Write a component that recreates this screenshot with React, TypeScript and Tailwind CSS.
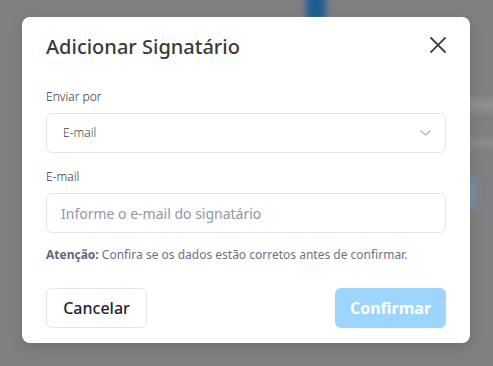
import React from "react";

export default function App() {
  return (
    <div
      className="relative w-[493px] h-[366px] overflow-hidden bg-[#808082]"
      style={{ fontFamily: '"Noto Sans", "Open Sans", sans-serif' }}
    >
      {/* blurred page content behind overlay */}
      <div className="absolute left-[306px] top-[-10px] w-[20px] h-[30px] rounded-md bg-[#1f5d94] blur-[3px]" />
      <div className="absolute left-[462px] top-[98px] w-[40px] h-[14px] bg-[#8e8f91] blur-[3px]" />
      <div className="absolute left-[462px] top-[138px] w-[40px] h-[10px] bg-[#8a8b8d] blur-[3px]" />
      <div className="absolute left-[466px] top-[176px] w-[10px] h-[34px] bg-[#7893a8] blur-[3px]" />

      <div className="relative ml-[22px] mt-[17px] w-[448px] h-[326px] rounded-lg bg-white px-6 pt-4 shadow-[0_4px_16px_rgba(0,0,0,0.15)]">
        <div className="flex h-[28px] items-center justify-between">
          <h2 className="text-[20px] leading-[28px] font-medium text-[#3a3a3a]">
            Adicionar Signatário
          </h2>
          <svg
            width="16"
            height="16"
            viewBox="0 0 16 16"
            className="-mt-[4px]"
            fill="none"
            stroke="#3f3f3f"
            strokeWidth="1.8"
            strokeLinecap="square"
          >
            <path d="M1 1 L15 15 M15 1 L1 15" />
          </svg>
        </div>

        <div className="mt-[28px] text-[12px] leading-[16px] font-light text-[#333]">Enviar por</div>
        <div className="mt-2 flex h-[40px] items-center justify-between rounded-md border border-[#e4e6eb] pl-[16px] pr-[14px]">
          <span className="text-[12px] font-light text-[#444]">E-mail</span>
          <svg width="11" height="6" viewBox="0 0 11 6" fill="none" stroke="#b5b5b5" strokeWidth="1.3">
            <path d="M0.5 0.5 L5.5 5 L10.5 0.5" />
          </svg>
        </div>

        <div className="mt-4 text-[12px] leading-[16px] font-light text-[#333]">E-mail</div>
        <div className="mt-2 flex h-[40px] items-center rounded-md border border-[#e4e6eb] pl-[14px]">
          <span className="text-[14px] text-[#8f97a6]">Informe o e-mail do signatário</span>
        </div>

        <p className="mt-[14px] text-[12px] leading-[16px] text-[#6b7385]">
          <span className="font-bold text-[#5f677a]">Atenção:</span> Confira se os dados estão corretos antes de confirmar.
        </p>

        <div className="mt-[25px] flex items-center justify-between">
          <div className="flex h-[40px] w-[101px] items-center justify-center rounded-md border border-[#e4e6eb] text-[16px] font-medium text-[#1f2433]">
            Cancelar
          </div>
          <div className="flex h-[40px] w-[111px] items-center justify-center rounded-md bg-[#9dd5fc] text-[16px] font-bold text-white">
            Confirmar
          </div>
        </div>
      </div>
    </div>
  );
}
